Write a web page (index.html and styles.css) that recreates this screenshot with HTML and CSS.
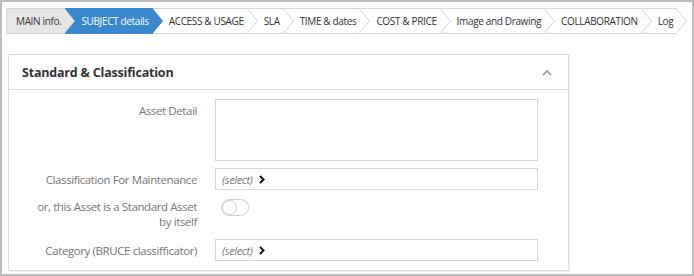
FILE: index.html
```html
<!DOCTYPE html>
<html lang="en">
<head>
  <meta charset="UTF-8" />
  <title>Asset - Subject details</title>
  <link rel="stylesheet" href="styles.css">
</head>
<body>
  <div class="frame">
    <!-- Steps -->
    <div class="steps">
      <div class="step done">MAIN info.<svg class="arrow" viewBox="0 0 11 26"><polygon points="0,0 10.5,13 0,26" /><polyline points="0,0.5 10.5,13 0,25.5" /></svg></div>
      <div class="step active">SUBJECT details<svg class="arrow" viewBox="0 0 11 26"><polygon points="0,0 10.5,13 0,26" /><polyline points="0,0.5 10.5,13 0,25.5" /></svg></div>
      <div class="step">ACCESS &amp; USAGE<svg class="arrow" viewBox="0 0 11 26"><polygon points="0,0 10.5,13 0,26" /><polyline points="0,0.5 10.5,13 0,25.5" /></svg></div>
      <div class="step">SLA<svg class="arrow" viewBox="0 0 11 26"><polygon points="0,0 10.5,13 0,26" /><polyline points="0,0.5 10.5,13 0,25.5" /></svg></div>
      <div class="step">TIME &amp; dates<svg class="arrow" viewBox="0 0 11 26"><polygon points="0,0 10.5,13 0,26" /><polyline points="0,0.5 10.5,13 0,25.5" /></svg></div>
      <div class="step">COST &amp; PRICE<svg class="arrow" viewBox="0 0 11 26"><polygon points="0,0 10.5,13 0,26" /><polyline points="0,0.5 10.5,13 0,25.5" /></svg></div>
      <div class="step">Image and Drawing<svg class="arrow" viewBox="0 0 11 26"><polygon points="0,0 10.5,13 0,26" /><polyline points="0,0.5 10.5,13 0,25.5" /></svg></div>
      <div class="step">COLLABORATION<svg class="arrow" viewBox="0 0 11 26"><polygon points="0,0 10.5,13 0,26" /><polyline points="0,0.5 10.5,13 0,25.5" /></svg></div>
      <div class="step">Log<svg class="arrow" viewBox="0 0 11 26"><polygon points="0,0 10.5,13 0,26" /><polyline points="0,0.5 10.5,13 0,25.5" /></svg></div>
    </div>

    <!-- Panel -->
    <div class="panel">
      <div class="panel-head">
        <h3>Standard &amp; Classification</h3>
        <svg class="collapse" width="10" height="7" viewBox="0 0 10 7"><polyline points="1,6 5,2 9,6" /></svg>
      </div>
      <div class="panel-body">
        <div class="row">
          <label>Asset Detail</label>
          <div class="area"></div>
        </div>
        <div class="row">
          <label>Classification For Maintenance</label>
          <div class="select"><em>(select)</em><svg class="chev" width="6" height="9" viewBox="0 0 6 9"><polyline points="1,1 4.5,4.5 1,8" /></svg></div>
        </div>
        <div class="row">
          <label class="two">or, this Asset is a Standard Asset<br>by itself</label>
          <div class="toggle"><span class="knob"></span></div>
        </div>
        <div class="row">
          <label>Category (BRUCE classifficator)</label>
          <div class="select"><em>(select)</em><svg class="chev" width="6" height="9" viewBox="0 0 6 9"><polyline points="1,1 4.5,4.5 1,8" /></svg></div>
        </div>
      </div>
    </div>
  </div>
</body>
</html>
```

FILE: styles.css
```css
* {
  margin: 0;
  padding: 0;
  box-sizing: border-box;
}

body {
  font-family: 'Open Sans', 'Noto Sans', sans-serif;
  background: #fff;
  width: 694px;
  height: 276px;
  overflow: hidden;
}

.frame {
  width: 694px;
  height: 276px;
  border: 2px solid #bdbdbd;
  padding: 6px 0 0 4px;
}

/* Steps bar */
.steps {
  display: flex;
  height: 26px;
}
.step {
  position: relative;
  display: flex;
  align-items: center;
  height: 26px;
  padding: 0 4px 0 16px;
  font-size: 10px;
  letter-spacing: -0.35px;
  color: #333;
  background: #fff;
  border-top: 1px solid #d6d6d6;
  border-bottom: 1px solid #d6d6d6;
  white-space: nowrap;
}
.step .arrow {
  position: absolute;
  top: -1px;
  right: -10px;
  width: 11px;
  height: 26px;
  z-index: 2;
}
.step .arrow polygon {
  fill: #fff;
}
.step .arrow polyline {
  fill: none;
  stroke: #d6d6d6;
  stroke-width: 1;
}
.step.done {
  background: #e6e6e6;
  border-left: 1px solid #d6d6d6;
  padding-left: 9px;
}
.step.done .arrow polygon {
  fill: #e6e6e6;
}
.step.active {
  background: #3a88cc;
  border-color: #3a88cc;
  color: #fff;
}
.step.active .arrow polygon {
  fill: #3a88cc;
}
.step.active .arrow polyline {
  stroke: #3a88cc;
}

/* Panel */
.panel {
  width: 561px;
  margin: 20px 0 0 2px;
  border: 1px solid #dcdcdc;
  box-shadow: 1px 1px 2px rgba(0, 0, 0, 0.08);
}
.panel-head {
  display: flex;
  align-items: center;
  justify-content: space-between;
  height: 35px;
  padding: 0 16px 0 13px;
  border-bottom: 1px solid #dcdcdc;
}
.panel-head h3 {
  font-size: 12.5px;
  font-weight: 700;
  color: #333;
  letter-spacing: -0.2px;
}
.collapse polyline {
  fill: none;
  stroke: #999;
  stroke-width: 1.6;
}
.panel-body {
  display: flex;
  flex-direction: column;
  gap: 7px;
  padding: 9px 0 9px 0;
}
.row {
  display: flex;
  gap: 18px;
}
.row label {
  width: 188px;
  text-align: right;
  font-size: 11.5px;
  color: #777;
  letter-spacing: -0.4px;
  line-height: 15px;
  padding-top: 4px;
}
.row label.two {
  padding: 2px 0 3px;
}
.area {
  width: 323px;
  height: 62px;
  border: 1px solid #d6d6d6;
}
.select {
  display: flex;
  align-items: center;
  gap: 6px;
  width: 323px;
  height: 22px;
  padding-left: 6px;
  border: 1px solid #d6d6d6;
}
.select em {
  font-size: 11px;
  color: #777;
  letter-spacing: -0.35px;
}
.chev polyline {
  fill: none;
  stroke: #111;
  stroke-width: 2;
}
.toggle {
  width: 28px;
  height: 17px;
  margin: 2px 0 0 6px;
  border: 1px solid #cfcfcf;
  border-radius: 9px;
  background: #fff;
}
.knob {
  display: block;
  width: 15px;
  height: 15px;
  border-radius: 50%;
  border: 1px solid #cfcfcf;
  background: #fff;
}
```
